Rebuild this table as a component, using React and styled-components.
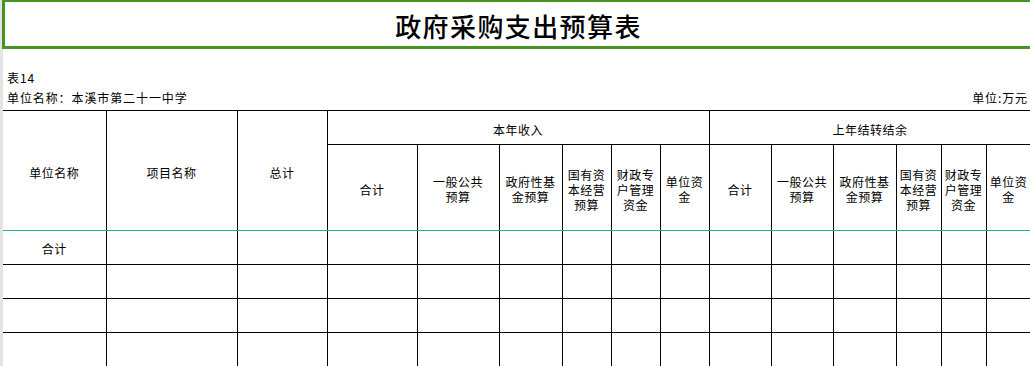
import React from 'react';
import styled, { createGlobalStyle } from 'styled-components';

const GlobalStyle = createGlobalStyle`
    html, body {
        margin: 0;
        padding: 0;
        background: #fff;
    }
    body {
        font-family: "Noto Sans CJK SC", "Liberation Sans", sans-serif;
        color: #000;
    }
`;

const Page = styled.div`
    width: 1030px;
    height: 366px;
    overflow: hidden;
    background: linear-gradient(to right, #e4e4e4 3px, #fff 3px);
`;

const TitleBox = styled.div`
    margin-left: 2px;
    width: 1025px;
    height: 44px;
    border: 3px solid #4b9424;
    border-top-width: 2px;
    background: #fff;
    display: flex;
    align-items: center;
    justify-content: center;
`;

const Title = styled.h1`
    margin: 0;
    padding-top: 4px;
    padding-left: 2px;
    font-size: 26px;
    font-weight: 500;
    letter-spacing: 1.4px;
    line-height: 30px;
`;

const Meta = styled.div`
    margin-top: 19px;
    padding: 0 2px 0 7px;
    font-size: 12px;
    line-height: 20px;
    letter-spacing: 0.9px;
`;

const MetaRow = styled.div`
    display: flex;
    justify-content: space-between;
`;

const Sheet = styled.table`
    margin: 2px 0 0 3px;
    border-collapse: collapse;
    table-layout: fixed;
    width: 1028px;
    font-size: 12px;
    line-height: 15px;
    letter-spacing: 0.5px;
`;

const HeadCell = styled.th`
    font-weight: 400;
    text-align: center;
    vertical-align: middle;
    border: 1px solid #000;
    border-bottom-color: ${p => (p.$frozen ? '#2bb673' : '#000')};
    height: ${p => p.$h}px;
    padding: 0;
    padding-top: 3px;
    &:first-child {
        border-left: none;
    }
`;

const Cell = styled.td`
    text-align: center;
    vertical-align: middle;
    border: 1px solid #000;
    height: 31px;
    padding: 0;
    padding-top: 2px;
    &:first-child {
        border-left: none;
    }
`;

const widths = [103, 131, 90, 90, 82, 63, 49, 49, 49, 62, 62, 63, 45, 45, 45];

const subHeads = [
    ['合计'],
    ['一般公共', '预算'],
    ['政府性基', '金预算'],
    ['国有资', '本经营', '预算'],
    ['财政专', '户管理', '资金'],
    ['单位资', '金'],
];

const Lines = ({ parts }) =>
    parts.map((t, i) => (
        <React.Fragment key={i}>
            {i > 0 && <br />}
            {t}
        </React.Fragment>
    ));

export default function App() {
    const bodyRows = [['合计'], [], [], []];
    return (
        <Page>
            <GlobalStyle />
            <TitleBox>
                <Title>政府采购支出预算表</Title>
            </TitleBox>
            <Meta>
                <div>表14</div>
                <MetaRow>
                    <span>单位名称：本溪市第二十一中学</span>
                    <span>单位:万元</span>
                </MetaRow>
            </Meta>
            <Sheet>
                <colgroup>
                    {widths.map((w, i) => (
                        <col key={i} style={{ width: w }} />
                    ))}
                </colgroup>
                <thead>
                    <tr>
                        <HeadCell rowSpan={2} $frozen>单位名称</HeadCell>
                        <HeadCell rowSpan={2} $frozen>项目名称</HeadCell>
                        <HeadCell rowSpan={2} $frozen>总计</HeadCell>
                        <HeadCell colSpan={6} $h={30}>本年收入</HeadCell>
                        <HeadCell colSpan={6} $h={30}>上年结转结余</HeadCell>
                    </tr>
                    <tr>
                        {[...subHeads, ...subHeads].map((parts, i) => (
                            <HeadCell key={i} $h={82} $frozen>
                                <Lines parts={parts} />
                            </HeadCell>
                        ))}
                    </tr>
                </thead>
                <tbody>
                    {bodyRows.map((row, r) => (
                        <tr key={r}>
                            {widths.map((_, c) => (
                                <Cell key={c}>{row[c] || ''}</Cell>
                            ))}
                        </tr>
                    ))}
                </tbody>
            </Sheet>
        </Page>
    );
}
